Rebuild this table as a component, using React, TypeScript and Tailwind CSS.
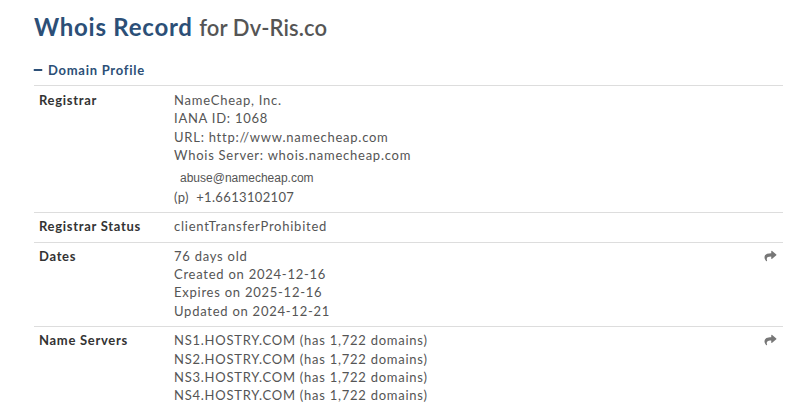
import React from "react";
import { FaShare, FaMinus } from "react-icons/fa";

const Row = ({ label, children, share, pad = "pt-[4px] pb-[6.5px]" }: { label: string; children: React.ReactNode; share?: boolean; pad?: string }) => (
  <div className={`flex border-t border-[#ddd] ${pad}`}>
    <div className="w-[140px] shrink-0 pl-[5px] text-[13px] leading-[18.3px] font-bold text-[#333] tracking-[0.7px]">{label}</div>
    <div className="flex-1 text-[13px] leading-[18.3px] text-[#555] tracking-[0.75px]">{children}</div>
    {share && (
      <div className="w-[24px] flex justify-end pr-[6px] pt-[3px] text-[#777]">
        <FaShare className="w-[13px] h-[12px]" />
      </div>
    )}
  </div>
);

export default function App() {
  return (
    <div className="w-[800px] h-[410px] bg-white overflow-hidden font-['Lato',sans-serif]">
      <div className="pl-[34px] pr-[17px] pt-[12px]">
        <h1 className="text-[24px] leading-[30px] font-bold text-[#2c4f77] tracking-[0.75px]">
          Whois Record <span className="text-[22px] font-semibold text-[#555] tracking-[0.1px]">for Dv-Ris.co</span>
        </h1>
        <div className="mt-[18px] flex items-center gap-[5px] text-[13px] font-bold text-[#2c4f77] leading-[18px] tracking-[0.73px]">
          <FaMinus className="w-[10px] h-[10px] -ml-[1px]" />
          <span>Domain Profile</span>
        </div>
        <div className="mt-[6px] border-b border-[#ddd]">
          <Row label="Registrar" pad="pt-[5px] pb-[5.5px]">
            <div>NameCheap, Inc.</div>
            <div>IANA ID: 1068</div>
            <div>URL: http://www.namecheap.com</div>
            <div>Whois Server: whois.namecheap.com</div>
            <div className="pt-[4px] pl-[6px] text-[12px] leading-[20px] tracking-normal font-['Liberation_Sans',sans-serif] text-[#555]">abuse@namecheap.com</div>
            <div className="tracking-[0.35px]">(p)&nbsp; +1.6613102107</div>
          </Row>
          <Row label="Registrar Status">
            <div>clientTransferProhibited</div>
          </Row>
          <Row label="Dates" share>
            <div>76 days old</div>
            <div>Created on 2024-12-16</div>
            <div>Expires on 2025-12-16</div>
            <div>Updated on 2024-12-21</div>
          </Row>
          <Row label="Name Servers" share>
            <div>NS1.HOSTRY.COM (has 1,722 domains)</div>
            <div>NS2.HOSTRY.COM (has 1,722 domains)</div>
            <div>NS3.HOSTRY.COM (has 1,722 domains)</div>
            <div>NS4.HOSTRY.COM (has 1,722 domains)</div>
          </Row>
        </div>
      </div>
    </div>
  );
}
